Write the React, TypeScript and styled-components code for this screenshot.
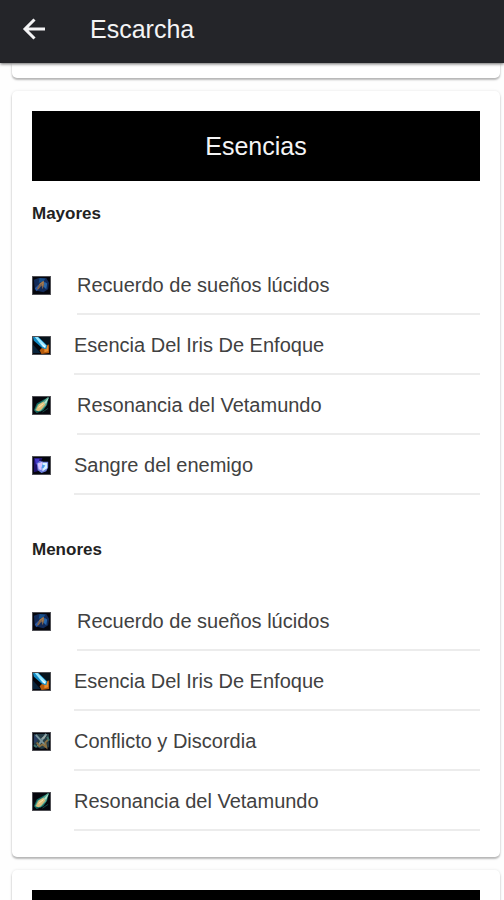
import React from "react";
import styled, { createGlobalStyle } from "styled-components";

const GlobalStyle = createGlobalStyle`
  *, *::before, *::after { box-sizing: border-box; }
  html, body, #root { height: 100%; }
  body {
    margin: 0;
    background: #fefefe;
    color: #333;
    font-family: "Liberation Sans", Arial, sans-serif;
  }
`;

const Screen = styled.div`
  display: flex;
  flex-direction: column;
  height: 100%;
  overflow: hidden;
`;

const TopBar = styled.header`
  position: relative;
  z-index: 1;
  flex: none;
  display: flex;
  align-items: center;
  gap: 40px;
  height: 63px;
  padding: 0 20px 6px;
  background: #242529;
  box-shadow: 0 1px 3px rgba(0, 0, 0, 0.6);
`;

const BackButton = styled.button`
  display: flex;
  padding: 0;
  border: 0;
  background: none;
  color: #f4f4f5;
  cursor: pointer;
`;

const Title = styled.h1`
  margin: 0;
  color: #f4f4f5;
  font-size: 25px;
  line-height: 32px;
  font-weight: 400;
`;

const Content = styled.main`
  flex: 1;
  min-height: 0;
  display: flex;
  flex-direction: column;
  gap: 13px;
  padding: 0 4px 0 12px;
  overflow: hidden;
`;

const Card = styled.section<{ $cut?: boolean }>`
  flex: none;
  padding: ${(p) => (p.$cut ? "15px 0 0" : "20px 20px 26px")};
  border-radius: ${(p) => (p.$cut ? "0 0 5px 5px" : "5px")};
  background: #fff;
  box-shadow: 0 2px 2px rgba(0, 0, 0, 0.26), 0 0 3px rgba(0, 0, 0, 0.1);
`;

const Banner = styled.h2`
  height: 70px;
  margin: 0;
  background: #000;
  color: #f4f4f5;
  font-size: 25px;
  line-height: 70px;
  font-weight: 400;
  text-align: center;
`;

const Group = styled.section`
  & + & { margin-top: 22px; }
`;

const GroupTitle = styled.h3`
  margin: 0;
  padding: 22px 0 30px;
  color: #222;
  font-size: 17px;
  line-height: 22px;
  font-weight: 700;
`;

const List = styled.ul`
  margin: 0;
  padding: 0;
  list-style: none;
`;

const Item = styled.li<{ $wide?: boolean }>`
  display: flex;
  align-items: center;
  gap: ${(p) => (p.$wide ? 26 : 23)}px;
  height: 60px;
`;

const ItemText = styled.span`
  flex: 1;
  align-self: stretch;
  border-bottom: 2px solid #ececec;
  color: #414141;
  font-size: 20px;
  line-height: 60px;
  white-space: nowrap;
`;

const Thumb = styled.svg`
  flex: none;
  width: 19px;
  height: 19px;
`;

type Kind = "memory" | "iris" | "resonance" | "blood" | "conflict";

const art: Record<Kind, React.ReactNode> = {
  memory: (
    <>
      <path d="M2 4L7 2L15 2L18 7L17 14L12 17L3 15Z" fill="#122a58" />
      <path d="M8 2L14 3L12 6L7 7Z" fill="#164f8b" />
      <path d="M3 13L7 9L8 12L5 16Z" fill="#2c5aa6" />
      <path d="M13 6L16 8L15 14L12 11Z" fill="#2868ac" />
      <path d="M5 14L8 8L12 5L13 9L11 14L10 10L7 14Z" fill="#80644d" />
      <path d="M8 9L12 6L11 10" fill="none" stroke="#b1814d" />
    </>
  ),
  iris: (
    <>
      <path d="M1 9L9 18H1Z" fill="#09243c" />
      <path d="M9 1H19V13L14 9Z" fill="#08141d" />
      <path d="M8 15L13 10L18 9L18 18L10 19Z" fill="#b75b0c" />
      <path d="M13 13L17 10L17 16L13 17Z" fill="#e98d2d" />
      <path d="M1 1H7L16 10L15 14L11 13L2 5Z" fill="#128bc6" />
      <path d="M3 1H6L15 10L14 13L11 11Z" fill="#9ae8ff" />
      <path d="M9 7L14 11L13 12Z" fill="#fff" />
    </>
  ),
  resonance: (
    <>
      <path d="M2 15L5 8L12 4L18 1L16 9L12 15L5 18Z" fill="#12675e" />
      <path d="M3 15L6 9L11 6L17 1L15 10L9 16Z" fill="#5da891" />
      <path d="M4 15L7 9L12 6L14 9L10 14L7 16Z" fill="#dfbd7a" />
      <path d="M12 8L18 1L15 8Z" fill="#b4e1cb" />
      <path d="M7 12L12 8" stroke="#fff0b5" />
      <path d="M11 17L17 13" stroke="#154b43" />
    </>
  ),
  blood: (
    <>
      <path d="M2 2H11L9 7L9 11L6 16L2 17Z" fill="#20126c" />
      <path d="M3 3H8L7 6L8 8L4 9Z" fill="#4439c7" />
      <path d="M5 8L8 5L12 6L17 6L17 12L15 16L10 18L6 15Z" fill="#6c7ddc" />
      <path d="M6 8L11 6L10 15L7 14Z" fill="#d6c3ff" />
      <path d="M11 7L16 7L16 13L11 16Z" fill="#d9f3ff" />
      <path d="M11 9L14 10L12 13L10 13Z" fill="#4d9fec" />
    </>
  ),
  conflict: (
    <>
      <path d="M2 2H18V16L10 18L2 15Z" fill="#243c46" />
      <path d="M2 3L7 6L5 10L2 12Z" fill="#263c60" />
      <path d="M4 3L14 14M15 2L6 15" stroke="#79959b" strokeWidth="2" />
      <path d="M5 11L8 15L11 13L15 16L14 11L17 8" fill="none" stroke="#8a7142" strokeWidth="2" />
      <path d="M9 7L16 2L13 7Z" fill="#9faaa6" />
      <path d="M2 14L5 16M16 5L18 9" stroke="#40766e" strokeWidth="2" />
    </>
  ),
};

function Essence({ kind, name, wide }: { kind: Kind; name: string; wide?: boolean }) {
  return (
    <Item $wide={wide}>
      <Thumb viewBox="0 0 20 20" aria-hidden="true">
        <rect width="20" height="20" fill="#55555a" />
        <rect x="1" y="1" width="18" height="18" fill="#05060d" />
        {art[kind]}
      </Thumb>
      <ItemText>{name}</ItemText>
    </Item>
  );
}

export default function App() {
  return (
    <Screen>
      <GlobalStyle />
      <TopBar>
        <BackButton type="button" aria-label="Volver">
          <svg width="30" height="30" viewBox="0 0 30 30" fill="none" stroke="currentColor" strokeWidth="3">
            <path d="M25 15H5M14.5 5.5L5 15L14.5 24.5" />
          </svg>
        </BackButton>
        <Title>Escarcha</Title>
      </TopBar>
      <Content>
        <Card $cut />
        <Card>
          <Banner>Esencias</Banner>
          <Group>
            <GroupTitle>Mayores</GroupTitle>
            <List>
              <Essence kind="memory" name="Recuerdo de sueños lúcidos" wide />
              <Essence kind="iris" name="Esencia Del Iris De Enfoque" />
              <Essence kind="resonance" name="Resonancia del Vetamundo" wide />
              <Essence kind="blood" name="Sangre del enemigo" />
            </List>
          </Group>
          <Group>
            <GroupTitle>Menores</GroupTitle>
            <List>
              <Essence kind="memory" name="Recuerdo de sueños lúcidos" wide />
              <Essence kind="iris" name="Esencia Del Iris De Enfoque" />
              <Essence kind="conflict" name="Conflicto y Discordia" />
              <Essence kind="resonance" name="Resonancia del Vetamundo" />
            </List>
          </Group>
        </Card>
        <Card>
          <Banner />
        </Card>
      </Content>
    </Screen>
  );
}
